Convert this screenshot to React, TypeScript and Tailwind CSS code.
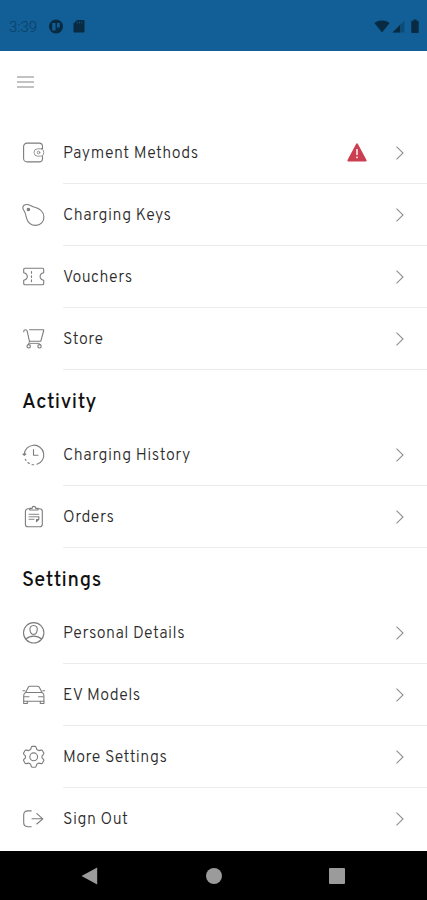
import type { ReactNode } from "react";

type Item = {
  label: string;
  icon: ReactNode;
  alert?: boolean;
};

function Icon({ children }: { children: ReactNode }) {
  return (
    <svg
      viewBox="0 0 24 24"
      className="w-6 h-6 shrink-0 text-[#7c7c7c]"
      fill="none"
      stroke="currentColor"
      strokeWidth="1.1"
      strokeLinecap="round"
      strokeLinejoin="round"
    >
      {children}
    </svg>
  );
}

const account: Item[] = [
  {
    label: "Payment Methods",
    alert: true,
    icon: (
      <Icon>
        <path d="M20.5 7.5V5.5a3.4 3.4 0 0 0-3.4-3.4H5A3.4 3.4 0 0 0 1.6 5.5v12A3.4 3.4 0 0 0 5 20.9h12.1a3.4 3.4 0 0 0 3.4-3.4V15.5" />
        <path d="M19.5 7.8h-3.800a3.700 3.700 0 0 0 0 7.400h3c1.900 0 3-1.500 3-3.700s-.9-3.700-2.200-3.700z" strokeWidth=".8" />
        <circle cx="16.500" cy="11.500" r="1.300" strokeWidth=".8" />
      </Icon>
    ),
  },
  {
    label: "Charging Keys",
    icon: (
      <Icon>
        <path d="M.8 4.800C.8 2.600 2.600 1.300 5.400 1.500c2.600.2 4.300 1.700 6.700 2.500 5.800 1.500 9.500 4.700 9.800 9.700.3 5-3.300 8.700-8.200 8.700-4.700 0-7.700-2.300-9.100-7C3.900 12.900 3.800 10.600 2.300 8.200 1.400 6.800.8 6 .8 4.800z" />
        <circle cx="6.400" cy="6.600" r="1.200" fill="currentColor" />
      </Icon>
    ),
  },
  {
    label: "Vouchers",
    icon: (
      <Icon>
        <path d="M3 3.200h17.400c.8 0 1.300.5 1.300 1.300v3.200c-2.400.5-3.600 1.900-3.600 3.800s1.200 3.300 3.600 3.800v3.200c0 .8-.5 1.300-1.300 1.300H3c-.8 0-1.300-.5-1.300-1.300v-3.200c2.400-.5 3.600-1.900 3.600-3.800S4.100 8.200 1.700 7.700V4.500c0-.8.500-1.300 1.300-1.300z" />
        <path d="M9.500 6.500v1.700M9.500 10.700v1.700M9.500 14.900v1.700" />
      </Icon>
    ),
  },
  {
    label: "Store",
    icon: (
      <Icon>
        <path d="M1.700 4.700c0-1.200.7-1.900 1.800-1.900s1.500.5 1.700 1.400l2.200 10h11.400l2.900-10.700c.1-.5-.1-.8-.6-.8H7.500" />
        <path d="M7.600 14.200l-1.300 3.400M7.600 16.400h9.700l1.200 1.200" strokeWidth=".9" />
        <circle cx="6.700" cy="19.300" r="1.700" />
        <circle cx="17.500" cy="19.300" r="1.700" />
      </Icon>
    ),
  },
];

const activity: Item[] = [
  {
    label: "Charging History",
    icon: (
      <Icon>
        <path d="M2.200 11.500A9.800 9.800 0 1 1 15 21.300" />
        <path d="M1 11l1.300 1.300L3.900 11z" fill="currentColor" />
        <path d="M3.300 16.300l.7 1.300M5.900 19.500l1.400 1M10 21.700l1.700.1" />
        <path d="M11.500 6.500v5.800h4.500" />
      </Icon>
    ),
  },
  {
    label: "Orders",
    icon: (
      <Icon>
        <path d="M7.500 3.800H6a2.600 2.600 0 0 0-2.600 2.600v12.800A2.600 2.600 0 0 0 6 21.800h11.700a2.600 2.600 0 0 0 2.600-2.600V6.400a2.600 2.600 0 0 0-2.600-2.600h-1.500" />
        <path d="M7.800 5V3.300h2.300c.1-1.200.8-1.900 1.800-1.900s1.700.7 1.800 1.900H16V5z" strokeWidth="1.200" />
        <path d="M7 9.300h9.800M7 11.800h9.800M7 14.300h5" strokeWidth=".9" />
        <path d="M16.800 11.800v2.500l-2.300 2.300v-2h2" />
      </Icon>
    ),
  },
];

const settings: Item[] = [
  {
    label: "Personal Details",
    icon: (
      <Icon>
        <circle cx="11.700" cy="11.800" r="10.200" />
        <path d="M11.600 4.500c-2.700 0-4.200 2-3.600 4.800.5 2.500 1.800 4.100 3.600 4.100s3.100-1.600 3.600-4.100c.6-2.800-.9-4.800-3.600-4.800z" />
        <path d="M3.800 18.200c2.100-2 4.700-3.100 7.900-3.100s5.800 1.100 7.900 3.100" />
      </Icon>
    ),
  },
  {
    label: "EV Models",
    icon: (
      <Icon>
        <path d="M3.600 9.500L6.300 4.300c.4-.8.900-1.100 1.700-1.100h7.600c.8 0 1.300.3 1.700 1.100L20 9.500M3.600 9.500H20M3.600 9.500c-1.300.6-1.900 1.700-1.900 3.200v5.500h20.200v-5.500c0-1.500-.6-2.600-1.900-3.200M1 7.800h1.800M20.800 7.800h1.800" />
        <path d="M1.700 18.200v2.300h3.600v-2.300M18.300 18.200v2.300h3.600v-2.300M2.500 13.800H7M16.600 13.800h4.500" />
      </Icon>
    ),
  },
  {
    label: "More Settings",
    icon: (
      <Icon>
        <path d="M9.300 2.300c.2-.6.500-.9 1.100-.9H13c.6 0 .9.300 1.100.9l.7 2.200 2 1.100 2.300-.5c.6-.1 1 0 1.300.5l1.300 2.300c.3.500.2.900-.2 1.400L20 10.900v1.900l1.500 1.600c.4.500.5.900.2 1.400l-1.300 2.300c-.3.500-.7.600-1.300.5l-2.300-.5-2 1.100-.7 2.200c-.2.600-.5.900-1.100.9h-2.600c-.6 0-.9-.3-1.100-.9l-.7-2.200-2-1.100-2.300.5c-.6.100-1 0-1.300-.5l-1.300-2.300c-.3-.5-.2-.9.200-1.400l1.500-1.600v-1.900L1.900 9.300c-.4-.5-.5-.9-.2-1.400L3 5.600c.3-.5.700-.6 1.300-.5l2.300.5 2-1.100z" />
        <circle cx="11.700" cy="11.800" r="3.900" />
      </Icon>
    ),
  },
  {
    label: "Sign Out",
    icon: (
      <Icon>
        <path d="M9.200 3.900H5.800c-2.700 0-4.100 1.400-4.100 4.100v7.600c0 2.700 1.400 4.100 4.100 4.100h3.400" />
        <path d="M10 11.800h10.800M14.800 6.600l6 5.200-6 5.200" />
      </Icon>
    ),
  },
];

function MenuRow({ item }: { item: Item }) {
  return (
    <li className="flex h-[62px] items-stretch pl-[22px]">
      <div className="flex items-center">{item.icon}</div>
      <div className="ml-[17px] flex flex-1 items-center border-b border-[#ececec] pr-[22px]">
        <span className="flex-1 pt-[2px] text-[16px] leading-6 font-light tracking-[0.48px] whitespace-nowrap text-[#2b2b2b]">
          {item.label}
        </span>
        {item.alert && (
          <svg viewBox="0 0 20 19" className="mr-[28px] h-[19px] w-5">
            <path d="M10 1.200L18.700 17.500H1.300z" fill="#cb3f50" stroke="#cb3f50" strokeWidth="1.800" strokeLinejoin="round" />
            <path d="M10 6v6M10 13.600v1.700" stroke="#f6dfe2" strokeWidth="1.700" />
          </svg>
        )}
        <svg viewBox="0 0 10 14" className="h-3.5 w-2.5" fill="none" stroke="#8f8f8f" strokeWidth="1.100">
          <path d="M1.500.7l6.500 6.300-6.500 6.300" />
        </svg>
      </div>
    </li>
  );
}

function MenuList({ items }: { items: Item[] }) {
  return (
    <ul>
      {items.map((item) => (
        <MenuRow key={item.label} item={item} />
      ))}
    </ul>
  );
}

function SectionTitle({ children }: { children: ReactNode }) {
  return (
    <h2 className="flex h-[54px] items-center pt-[11px] pl-[22px] text-[20px] font-medium tracking-[0.6px] text-[#111111]">
      {children}
    </h2>
  );
}

export default function App() {
  return (
    <div className="flex h-[900px] w-[427px] flex-col overflow-hidden bg-white font-['Overpass','Roboto','Liberation_Sans',sans-serif]">
      {/* Status bar */}
      <header className="flex h-[51px] shrink-0 items-center bg-[#115f96] pt-[2px] pr-[8px] pl-[9px] text-[#082b43]">
        <span className="w-[39px] pt-px font-['Roboto',sans-serif] text-[15px] font-light text-[#0b3d62]">3:39</span>
        <svg viewBox="0 0 16 16" className="h-4 w-4" fill="currentColor">
          <circle cx="8" cy="7.500" r="7" />
          <path d="M4.300 4h3.200v7.500H4.300zM9 4h2.700v4.500H9z" fill="#115f96" />
        </svg>
        <svg viewBox="0 0 12 14" className="mb-px ml-[9px] h-3.5 w-3" fill="currentColor">
          <path d="M4 1h6.500c.5 0 1 .5 1 1v10.500c0 .5-.5 1-1 1h-9c-.5 0-1-.5-1-1v-8z" />
          <path d="M4.300 2.500v2M6.500 2.500v2M8.700 2.500v2" stroke="#115f96" strokeWidth=".7" />
        </svg>
        <div className="mb-px ml-auto flex items-center">
          <svg viewBox="0 0 16 13" className="h-[13px] w-4" fill="currentColor">
            <path d="M.3 3C4.700-.3 11.300-.3 15.700 3L8 12.500z" />
          </svg>
          <svg viewBox="0 0 13 13" className="ml-[2px] h-[13px] w-[13px]" fill="currentColor">
            <path d="M12.500.5v12H.5z" opacity=".35" />
            <path d="M8 5v7.500H.5z" />
          </svg>
          <svg viewBox="0 0 8 14" className="ml-[6px] h-3.5 w-2" fill="currentColor">
            <path d="M2.500.5h3v1.200h1.200c.6 0 1 .4 1 1V13c0 .6-.4 1-1 1H1.300c-.6 0-1-.4-1-1V2.700c0-.6.4-1 1-1h1.200z" />
          </svg>
        </div>
      </header>

      {/* Menu button */}
      <div className="flex h-[71px] shrink-0 items-start pt-[25px] pl-[17px]">
        <button aria-label="Menu" className="flex flex-col gap-[3px]">
          <span className="h-[2px] w-[17px] bg-[#c2c2c2]" />
          <span className="h-[2px] w-[17px] bg-[#c2c2c2]" />
          <span className="h-[2px] w-[17px] bg-[#c2c2c2]" />
        </button>
      </div>

      <main className="h-[727px] shrink-0 overflow-hidden">
        <MenuList items={account} />
        <SectionTitle>Activity</SectionTitle>
        <MenuList items={activity} />
        <SectionTitle>Settings</SectionTitle>
        <MenuList items={settings} />
      </main>

      {/* Android navigation */}
      <nav className="mt-auto flex h-[49px] shrink-0 items-center justify-between bg-black pr-[82px] pl-[81px]">
        <svg viewBox="0 0 17 18" className="h-[18px] w-[17px]" fill="#9b9b9b">
          <path d="M16.200.5v17L.5 9z" />
        </svg>
        <span className="h-4 w-4 rounded-full bg-[#9b9b9b]" />
        <span className="h-4 w-4 rounded-[1px] bg-[#9b9b9b]" />
      </nav>
    </div>
  );
}
